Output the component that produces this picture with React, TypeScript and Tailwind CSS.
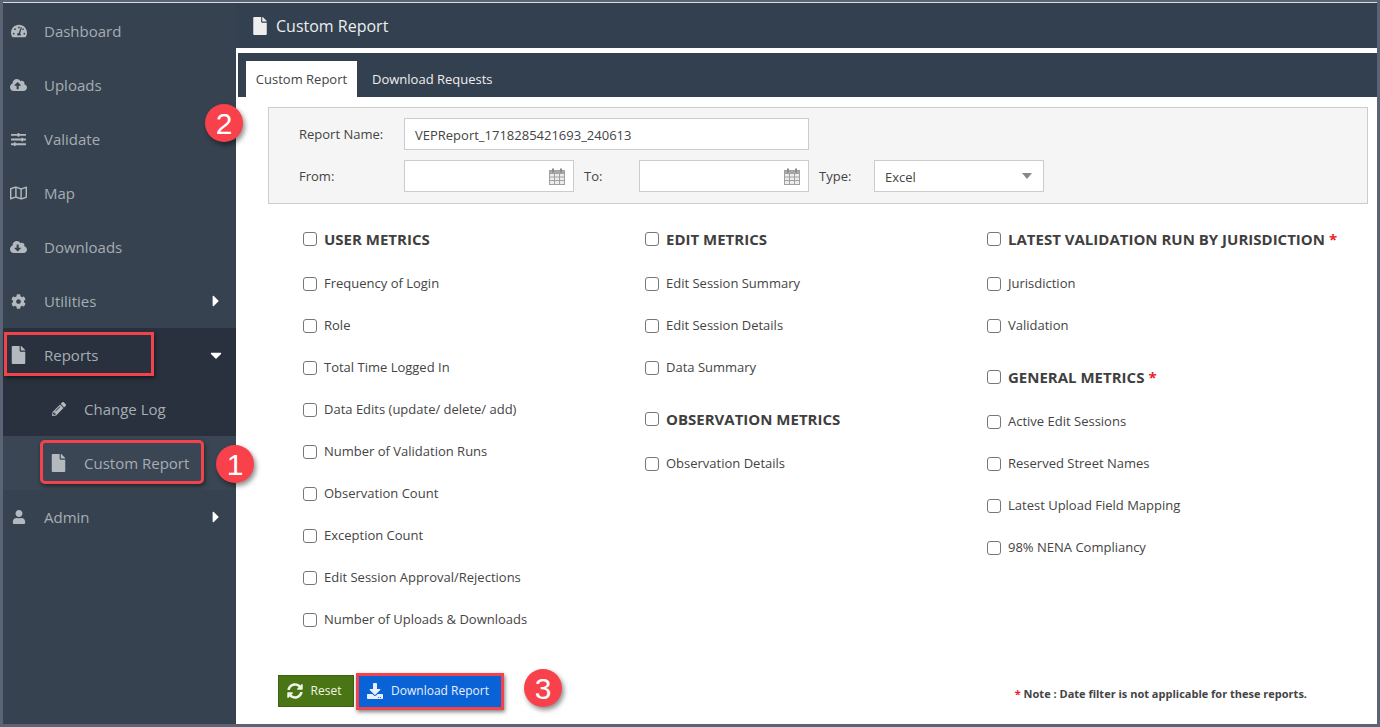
import type { ReactNode } from "react"
import {
  FaTachometerAlt,
  FaCloudUploadAlt,
  FaSlidersH,
  FaRegMap,
  FaCloudDownloadAlt,
  FaCog,
  FaFile,
  FaPencilAlt,
  FaUser,
  FaSyncAlt,
  FaDownload,
  FaCaretRight,
  FaCaretDown,
} from "react-icons/fa"

const navTop = [
  { name: "Dashboard", icon: <FaTachometerAlt size={16} /> },
  { name: "Uploads", icon: <FaCloudUploadAlt size={18} /> },
  { name: "Validate", icon: <FaSlidersH size={15} /> },
  { name: "Map", icon: <FaRegMap size={18} /> },
  { name: "Downloads", icon: <FaCloudDownloadAlt size={18} /> },
]

const columns = [
  [
    {
      title: "USER METRICS",
      items: [
        "Frequency of Login",
        "Role",
        "Total Time Logged In",
        "Data Edits (update/ delete/ add)",
        "Number of Validation Runs",
        "Observation Count",
        "Exception Count",
        "Edit Session Approval/Rejections",
        "Number of Uploads & Downloads",
      ],
    },
  ],
  [
    { title: "EDIT METRICS", items: ["Edit Session Summary", "Edit Session Details", "Data Summary"] },
    { title: "OBSERVATION METRICS", items: ["Observation Details"] },
  ],
  [
    { title: "LATEST VALIDATION RUN BY JURISDICTION", star: true, items: ["Jurisdiction", "Validation"] },
    {
      title: "GENERAL METRICS",
      star: true,
      items: ["Active Edit Sessions", "Reserved Street Names", "Latest Upload Field Mapping", "98% NENA Compliancy"],
    },
  ],
]

function NavRow({ icon, name, caret, className }: { icon: ReactNode; name: string; caret?: ReactNode; className?: string }) {
  return (
    <div className={`flex h-[54px] items-center pr-[11px] pl-[7px] text-[15px] text-[#a6adb4] ${className ?? ""}`}>
      <span className="flex w-[17px] justify-center text-[#b4b9bf]">{icon}</span>
      <span className="ml-[17px] flex-1">{name}</span>
      {caret && <span className="text-white">{caret}</span>}
    </div>
  )
}

function SubRow({ icon, name, className }: { icon: ReactNode; name: string; className?: string }) {
  return (
    <div className={`flex h-[54px] items-center pl-[47px] text-[15px] text-[#a6adb4] ${className ?? ""}`}>
      <span className="flex w-[17px] justify-center text-[#b4b9bf]">{icon}</span>
      <span className="ml-[17px]">{name}</span>
    </div>
  )
}

function Check() {
  return <span className="mr-[7px] inline-block h-[14px] w-[14px] shrink-0 rounded-[3px] border border-[#777] bg-white" />
}

function CalendarIcon() {
  return (
    <svg width="16" height="17" viewBox="0 0 16 17" fill="none" stroke="#a0a0a0" strokeWidth="1">
      <rect x="0.5" y="2.5" width="15" height="14" fill="#ececec" />
      <rect x="0.5" y="2.5" width="15" height="3" fill="#a8a8a8" />
      <path d="M4 0.5v4M12 0.5v4" strokeWidth="2" stroke="#8c8c8c" />
      <path d="M5.5 5.5v11M10.5 5.5v11M0.5 9h15M0.5 12.5h15" />
    </svg>
  )
}

function DateInput() {
  return (
    <div className="flex h-[32px] w-[170px] items-center justify-end border border-[#ccc] bg-white pr-[8px]">
      <CalendarIcon />
    </div>
  )
}

function Badge({ n, className }: { n: number; className: string }) {
  return (
    <div
      className={`absolute flex h-[38px] w-[38px] items-center justify-center rounded-full bg-[#f8414a] font-['Liberation_Sans',sans-serif] text-[30px] text-white shadow-[2px_3px_5px_rgba(0,0,0,0.45)] ${className}`}
    >
      {n}
    </div>
  )
}

export default function App() {
  return (
    <div className="relative flex h-[727px] w-[1380px] flex-col overflow-hidden bg-[#5b6475] pt-[2px] pr-[3px] pb-[3px] pl-[3px] font-['Open_Sans',sans-serif] text-[#444]">
      <div className="h-px shrink-0 bg-[#d8dbe0]" />
      <div className="flex min-h-0 flex-1">
        <aside className="w-[233px] shrink-0 bg-[#36424f] pt-px">
          {navTop.map((n) => (
            <NavRow key={n.name} name={n.name} icon={n.icon} />
          ))}
          <NavRow name="Utilities" icon={<FaCog size={15} />} caret={<FaCaretRight size={18} />} />
          <NavRow name="Reports" icon={<FaFile size={18} />} caret={<FaCaretDown size={18} />} className="bg-[#28313d]" />
          <SubRow name="Change Log" icon={<FaPencilAlt size={14} />} className="bg-[#28313d]" />
          <SubRow name="Custom Report" icon={<FaFile size={18} />} className="bg-[#3a4653]" />
          <NavRow name="Admin" icon={<FaUser size={14} />} caret={<FaCaretRight size={18} />} />
        </aside>

        <main className="flex min-w-0 flex-1 flex-col bg-white">
          <header className="flex h-[45px] shrink-0 items-center bg-[#33404f] pl-[16px] text-[16px] text-[#eceef0]">
            <FaFile size={18} className="mr-[7px] -ml-px text-[#eeeeee]" />
            Custom Report
          </header>

          <div className="mt-[5px] ml-[2px] flex h-[44px] shrink-0 items-end bg-[#33404f] pl-[8px] text-[13px]">
            <div className="flex h-[36px] w-[111px] items-center justify-center bg-white pt-[2px] text-[#444]">Custom Report</div>
            <div className="flex h-[36px] items-center pt-[2px] pl-[15px] text-[#eeeeee]">Download Requests</div>
          </div>

          <section className="mt-[10px] ml-[32px] flex h-[97px] w-[1100px] shrink-0 flex-col gap-[10px] border border-[#ccc] bg-[#f5f5f5] pt-[10px] pl-[30px] text-[13px]">
            <div className="flex items-center">
              <label className="w-[105px] pt-[2px]">Report Name:</label>
              <div className="flex h-[32px] w-[405px] items-center border border-[#ccc] bg-white pt-[4px] pl-[10px]">
                VEPReport_1718285421693_240613
              </div>
            </div>
            <div className="flex items-center">
              <label className="w-[105px] pt-[2px]">From:</label>
              <DateInput />
              <label className="w-[65px] pt-[2px] pl-[10px]">To:</label>
              <DateInput />
              <label className="w-[65px] pt-[2px] pl-[10px]">Type:</label>
              <div className="flex h-[32px] w-[170px] items-center justify-between border border-[#ccc] bg-white pr-[11px] pl-[10px]">
                <span className="pt-[4px]">Excel</span>
                <span className="h-0 w-0 border-x-[5px] border-t-[6px] border-x-transparent border-t-[#888]" />
              </div>
            </div>
          </section>

          <div className="mt-[15px] ml-[67px] grid flex-1 grid-cols-[342px_342px_auto] text-[13px]">
            {columns.map((groups, i) => (
              <div key={i}>
                {groups.map((g, j) => (
                  <div key={g.title} className={j > 0 ? "mt-[10px]" : ""}>
                    <div className="mb-[4px] flex h-[40px] items-center text-[15px] font-bold text-[#3f3f3f]">
                      <Check />
                      {g.title}
                      {g.star && <span className="ml-[4px] text-[#e8202a]">*</span>}
                    </div>
                    {g.items.map((item) => (
                      <div key={item} className="flex h-[42px] items-center">
                        <Check />
                        {item}
                      </div>
                    ))}
                  </div>
                ))}
              </div>
            ))}
          </div>

          <footer className="mb-[17px] ml-[42px] flex h-[32px] shrink-0 items-center gap-[4px] text-[12px]">
            <button className="flex h-[32px] w-[76px] items-center justify-center border border-[#3c6310] bg-[#4a7514] pr-[4px] text-[#f1f4ea]">
              <FaSyncAlt size={16} className="mr-[8px]" />
              Reset
            </button>
            <button className="flex h-[32px] w-[143px] items-center justify-center bg-[#0a63d6] pr-[3px] text-[#e8f0fb]">
              <FaDownload size={16} className="mr-[8px]" />
              Download Report
            </button>
            <div className="ml-auto pt-[7px] pr-[70px] text-[11px] font-bold text-[#444]">
              <span className="text-[#e8202a]">*</span> Note : Date filter is not applicable for these reports.
            </div>
          </footer>
        </main>
      </div>

      {/* annotations over the screenshot */}
      <div className="absolute top-[332px] left-[4px] h-[44px] w-[150px] border-[3px] border-[#f0434b] shadow-[1px_2px_4px_rgba(0,0,0,0.5)]" />
      <div className="absolute top-[440px] left-[40px] h-[44px] w-[164px] rounded-[5px] border-[3px] border-[#f0434b] shadow-[1px_2px_4px_rgba(0,0,0,0.5)]" />
      <div className="absolute top-[673px] left-[356px] h-[37px] w-[148px] border-[3px] border-[#f0434b] shadow-[1px_2px_4px_rgba(0,0,0,0.5)]" />
      <Badge n={2} className="top-[104px] left-[205px]" />
      <Badge n={1} className="top-[445px] left-[216px]" />
      <Badge n={3} className="top-[669px] left-[524px]" />
    </div>
  )
}
